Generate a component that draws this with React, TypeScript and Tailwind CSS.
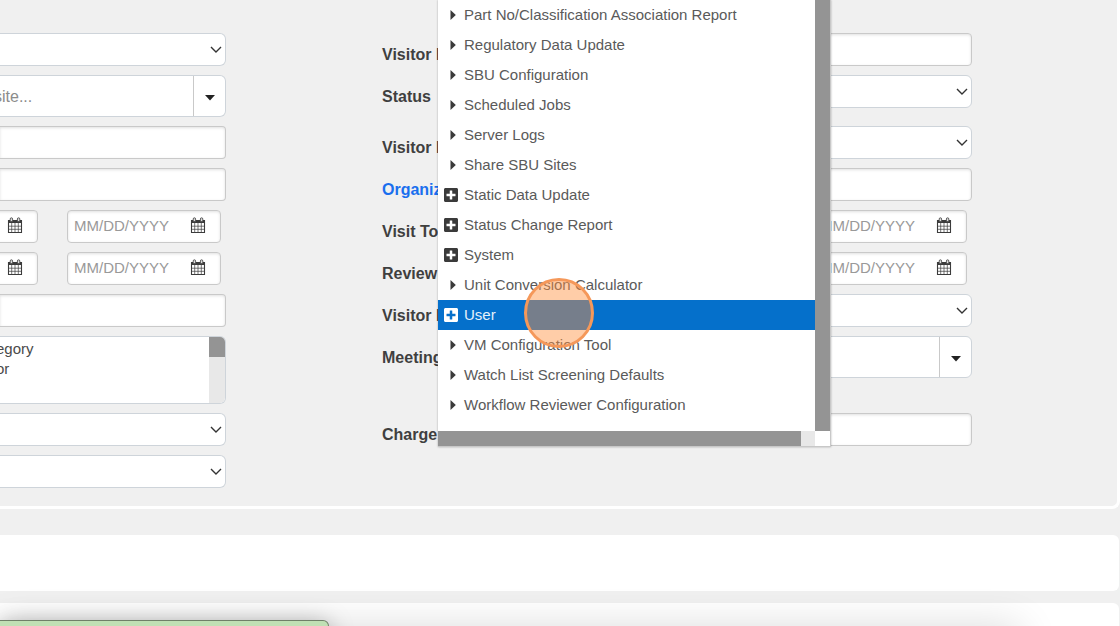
import type { ReactNode } from "react";
import clsx from "clsx";
import { FaPlusSquare } from "react-icons/fa";

interface MenuItem {
  name: string;
  expandable?: boolean;
  active?: boolean;
}

const menuItems: MenuItem[] = [
  { name: "Part No/Classification Association Report" },
  { name: "Regulatory Data Update" },
  { name: "SBU Configuration" },
  { name: "Scheduled Jobs" },
  { name: "Server Logs" },
  { name: "Share SBU Sites" },
  { name: "Static Data Update", expandable: true },
  { name: "Status Change Report", expandable: true },
  { name: "System", expandable: true },
  { name: "Unit Conversion Calculator" },
  { name: "User", expandable: true, active: true },
  { name: "VM Configuration Tool" },
  { name: "Watch List Screening Defaults" },
  { name: "Workflow Reviewer Configuration" },
];

const boxStyle = "border border-[#c9c9c9] bg-white shadow-[inset_0_1px_3px_rgba(0,0,0,0.12)]";

function CalendarIcon() {
  return (
    <svg viewBox="0 0 16 17" className="w-4 h-[17px]" fill="none" stroke="#3c3c3c">
      <path d="M1.5 3.5h13v12h-13z" strokeWidth="1.1" />
      <path d="M1 3h14v3H1z" fill="#3c3c3c" stroke="none" />
      <path d="M4.7 6v9.5M8 6v9.5M11.3 6v9.5M1.5 9.2h13M1.5 12.3h13" strokeWidth="0.7" />
      <rect x="3.2" y="0.8" width="2.4" height="3.8" rx="1.2" fill="#ddd" strokeWidth="0.8" />
      <rect x="10.4" y="0.8" width="2.4" height="3.8" rx="1.2" fill="#ddd" strokeWidth="0.8" />
    </svg>
  );
}

function TextField({ id, label, cut }: { id: string; label?: string; cut?: boolean }) {
  return (
    <input
      id={id}
      type="text"
      aria-label={label}
      className={clsx(boxStyle, "w-full h-[33px] px-1.5", cut ? "rounded-r border-l-0" : "rounded")}
    />
  );
}

function SelectField({ id, label, cut }: { id: string; label?: string; cut?: boolean }) {
  return (
    <div className="relative w-full">
      <select
        id={id}
        aria-label={label}
        className={clsx(
          "block w-full h-[33px] px-1.5 appearance-none border border-[#ced4da] bg-white",
          cut ? "rounded-r-md border-l-0" : "rounded-md"
        )}
      />
      <svg viewBox="0 0 12 8" className="absolute right-1 top-[13px] w-3 h-2 pointer-events-none" fill="none" stroke="#333" strokeWidth="1.4">
        <path d="M1 1l5 5 5-5" />
      </svg>
    </div>
  );
}

function ComboField({ id, label, placeholder, cut }: { id: string; label?: string; placeholder?: string; cut?: boolean }) {
  return (
    <div className={clsx("flex w-full h-[42px] overflow-hidden border border-[#ced4da] bg-white", cut ? "rounded-r-md border-l-0" : "rounded-md")}>
      <input
        id={id}
        type="text"
        aria-label={label}
        placeholder={placeholder}
        className={clsx("flex-1 min-w-0 pt-0.5 text-base placeholder:text-[#8c8c8c]", cut ? "-ml-1.5" : "pl-1.5")}
      />
      <button type="button" aria-label="Open list" className="flex items-center justify-center w-8 border-l border-[#c9c9c9]">
        <svg viewBox="0 0 10 6" className="w-2.5 h-1.5 mt-1" fill="#222">
          <path d="M0 0h10L5 5.5z" />
        </svg>
      </button>
    </div>
  );
}

function DateField({ id, label }: { id: string; label?: string }) {
  return (
    <div className={clsx(boxStyle, "flex shrink-0 items-center w-[154px] h-[33px] rounded pl-1.5 pr-3.5")}>
      <input
        id={id}
        type="text"
        aria-label={label}
        placeholder="MM/DD/YYYY"
        className="flex-1 min-w-0 placeholder:text-[#999]"
      />
      <button type="button" aria-label="Pick a date" className="-mt-0.5">
        <CalendarIcon />
      </button>
    </div>
  );
}

function DateRange({ id, label }: { id: string; label: string }) {
  return (
    <div className="flex justify-end w-full gap-[29px] pr-[5px] overflow-hidden">
      <DateField id={`${id}-from`} label={`${label} from`} />
      <DateField id={`${id}-to`} label={`${label} to`} />
    </div>
  );
}

function Row({ id, label, link, children }: { id: string; label: string; link?: boolean; children: ReactNode }) {
  return (
    <div className="flex items-start">
      <label
        htmlFor={id}
        className="w-[243px] shrink-0 pt-[11px] leading-[22px] text-base font-bold text-[#3f3f3f]"
      >
        {link ? <a href="#organization" className="text-[#1a6fee]">{label}</a> : label}
      </label>
      <div className="flex flex-1 min-w-0 justify-end">{children}</div>
    </div>
  );
}

function NavMenu() {
  return (
    <nav className="absolute top-0 left-[438px] w-[393px] bg-white border-r border-b border-[#c8c8c8] shadow-[0_0_2px_rgba(0,0,0,0.3)]">
      <div className="flex">
        <ul className="flex-1 h-[431px]">
          {menuItems.map((item) => (
            <li key={item.name}>
              <a
                href="#menu"
                className={clsx(
                  "flex items-center h-[30px] pl-1.5 gap-1.5 whitespace-nowrap",
                  item.active ? "bg-[#0570cb] text-[#e6f1fa]" : "text-[#5a5a5a]"
                )}
              >
                <span className="flex justify-center w-3.5 shrink-0">
                  {item.expandable ? (
                    <FaPlusSquare className={clsx("w-3.5 h-4", item.active ? "text-white" : "text-[#3a3a3a]")} />
                  ) : (
                    <svg viewBox="0 0 6 10" className="w-1.5 h-2.5 ml-1" fill="#3a3a3a">
                      <path d="M0.5 0L5.8 5L0.5 10z" />
                    </svg>
                  )}
                </span>
                <span>{item.name}</span>
              </a>
            </li>
          ))}
        </ul>
        <div className="w-[15px] bg-[#949494]" />
      </div>
      {/* Horizontal scrollbar */}
      <div className="flex h-[15px] pr-[15px]">
        <div className="flex-1 bg-[#949494]" />
        <div className="w-3.5 bg-[#e8e8e8]" />
      </div>
    </nav>
  );
}

export default function App() {
  return (
    <div className="relative h-screen overflow-hidden bg-[#f0f0f0] font-['Liberation_Sans',sans-serif] text-[15px]">
      <form className="grid grid-cols-[226fr_590fr] gap-x-[156px] gap-y-[9px] pt-[33px] pb-[18px] pr-[145px] border-r-3 border-b-3 border-white rounded-br-lg">
        <SelectField id="type" label="Type" cut />
        <Row id="visitor-first" label="Visitor F"><TextField id="visitor-first" /></Row>

        <ComboField id="site" label="Site" placeholder="site..." cut />
        <Row id="status" label="Status"><SelectField id="status" /></Row>

        <TextField id="name" label="Name" cut />
        <Row id="visitor-from" label="Visitor F"><SelectField id="visitor-from" /></Row>

        <TextField id="number" label="Number" cut />
        <Row id="organization" label="Organiz" link><TextField id="organization" /></Row>

        <DateRange id="start" label="Start" />
        <Row id="visit-to" label="Visit To"><DateRange id="visit" label="Visit" /></Row>

        <DateRange id="end" label="End" />
        <Row id="review-to" label="Review"><DateRange id="review" label="Review" /></Row>

        <TextField id="purpose" label="Purpose" cut />
        <Row id="visitor-d" label="Visitor D"><SelectField id="visitor-d" /></Row>

        <div className="flex h-[68px] overflow-hidden border border-l-0 border-[#ced4da] rounded-r-md bg-white">
          <ul className="flex-1 -ml-1 pt-0.5 leading-5 text-[#4a4a4a]">
            <li>egory</li>
            <li>or</li>
          </ul>
          <div className="w-4 bg-[#e8e8e8]">
            <div className="h-5 bg-[#949494]" />
          </div>
        </div>
        <Row id="meeting" label="Meeting"><ComboField id="meeting" /></Row>

        <SelectField id="country" label="Country" cut />
        <Row id="charge" label="Charge"><TextField id="charge" /></Row>

        <SelectField id="state" label="State" cut />
      </form>

      <section className="h-14 mt-[26px] mr-px bg-white rounded-r-md" />
      <section className="h-14 mt-3 mr-px bg-white rounded-r-md" />

      <NavMenu />

      {/* Click highlight */}
      <div className="absolute left-[524px] top-[278px] w-[70px] h-[70px] rounded-full border-3 border-[#f5985a] bg-[#ff8f3d]/45 pointer-events-none" />

      {/* Toast */}
      <div className="absolute top-full left-0 w-[1020px] h-14 shadow-[0_0_40px_rgba(0,0,0,0.14)]" />
      <div className="absolute top-[620px] left-0 w-[329px] h-14 bg-[#c0e0b4] border border-l-0 border-[#6f8068] rounded-tr-md shadow-[0_4px_24px_rgba(0,0,0,0.35)]" />
    </div>
  );
}
